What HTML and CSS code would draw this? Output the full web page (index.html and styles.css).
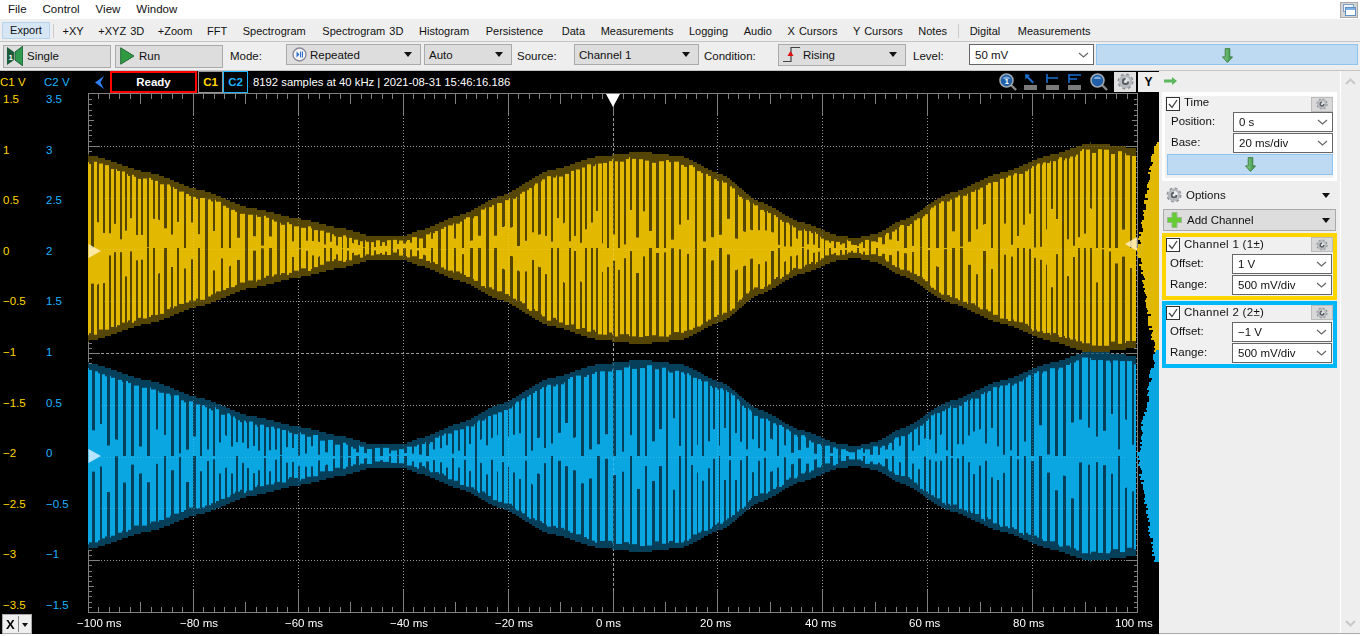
FILE: index.html
```html
<!DOCTYPE html>
<html lang="en">
<head>
<meta charset="utf-8">
<title>Scope</title>
<link rel="stylesheet" href="styles.css">
</head>
<body>
<svg class="defs" width="0" height="0" aria-hidden="true">
  <defs>
    <linearGradient id="gr" x1="0" x2="1" y1="0" y2="0"><stop offset="0" stop-color="#8fd08f"/><stop offset="1" stop-color="#2f8f3f"/></linearGradient>
    <symbol id="gear" viewBox="0 0 16 16">
      <circle cx="8" cy="8" r="6" fill="none" stroke="#8a8f96" stroke-width="3" stroke-dasharray="2.4 2.3"/>
      <circle cx="8" cy="8" r="5.2" fill="none" stroke="#b4b8bc" stroke-width="2.4"/>
      <path d="M8 4.500a3.500 3.500 0 1 0 3.500 3.500L8 8z" fill="#5a5f66"/>
      <circle cx="8" cy="8" r="1.500" fill="#e8e8e8"/>
    </symbol>
    <symbol id="down" viewBox="0 0 12 16">
      <path d="M3.500 .5h5v9h3L6 15.500 .5 9.500h3z" fill="url(#gr)" stroke="#3c7a3c"/>
    </symbol>
    <symbol id="chev" viewBox="0 0 11 6">
      <path d="M1 1l4.500 4L10 1" fill="none" stroke="#666" stroke-width="1.2"/>
    </symbol>
    <symbol id="check" viewBox="0 0 14 14">
      <rect x=".5" y=".5" width="13" height="13" fill="#fff" stroke="#333"/>
      <path d="M3 7l3 3.500L11 3" fill="none" stroke="#444" stroke-width="1.3"/>
    </symbol>
    <symbol id="mag" viewBox="0 0 18 18">
      <path d="M11 11l6 6" stroke="#8a8a8a" stroke-width="2.400"/>
      <circle cx="7.500" cy="7.500" r="6.500" fill="#1f5fa8" stroke="#a0a8b0" stroke-width="1.600"/>
      <path d="M3.500 6a4.500 4.500 0 0 1 8 0" fill="#7fa8d8"/>
    </symbol>
  </defs>
</svg>

<header class="menubar">
  <span>File</span><span>Control</span><span>View</span><span>Window</span>
  <svg class="restore" width="18" height="16" viewBox="0 0 18 16"><rect x=".5" y=".5" width="17" height="15" fill="#d4d4d4" stroke="#aaa"/><rect x="3.500" y="2.500" width="10" height="7" fill="#eef4fb" stroke="#7f9fc4"/><rect x="5.500" y="5.500" width="10" height="8" fill="#fff" stroke="#5f8fc4"/><rect x="6" y="6" width="9" height="2" fill="#7fb0e4"/></svg>
</header>

<nav class="tabs">
  <span class="tab-active">Export</span>
  <i class="tab-sep"></i>
  <span>+XY</span><span>+XYZ 3D</span><span>+Zoom</span><span>FFT</span><span>Spectrogram</span><span>Spectrogram 3D</span><span>Histogram</span><span>Persistence</span><span>Data</span><span>Measurements</span><span>Logging</span><span>Audio</span><span>X Cursors</span><span>Y Cursors</span><span>Notes</span>
  <i class="tab-sep"></i>
  <span>Digital</span><span>Measurements</span>
</nav>

<section class="controls">
  <div class="btn btn-single">
    <svg width="16" height="20" viewBox="0 0 16 20"><path d="M0 1l7 5v8l-7 5z" fill="#1d5a3a"/><path d="M16 0l-8 6v8l8 6z" fill="#2f9a4f" stroke="#1d5a3a"/><text x="1.500" y="14" class="icon-one">1</text></svg>
    <span>Single</span>
  </div>
  <div class="btn btn-run">
    <svg width="15" height="18" viewBox="0 0 15 18"><path d="M.7.8L14 9 .7 17.200z" fill="#2f9a3f" stroke="#256b3a"/></svg>
    <span>Run</span>
  </div>
  <span class="lbl lbl-mode">Mode:</span>
  <div class="sel sel-mode">
    <svg width="15" height="15" viewBox="0 0 15 15"><circle cx="7.500" cy="7.500" r="6.500" fill="#f4f4f4" stroke="#8a8a9a" stroke-width="1.400"/><path d="M4.500 4.500v6l3-3zM8 4.500h1.200v6H8zM10 4.500h1v6h-1z" fill="#2f6fd0"/></svg>
    <span>Repeated</span><i class="caret"></i>
  </div>
  <div class="sel sel-auto"><span>Auto</span><i class="caret"></i></div>
  <span class="lbl lbl-source">Source:</span>
  <div class="sel sel-source"><span>Channel 1</span><i class="caret"></i></div>
  <span class="lbl lbl-cond">Condition:</span>
  <div class="sel sel-rising">
    <svg width="17" height="17" viewBox="0 0 17 17"><path d="M0 15.500h8v-14h9" fill="none" stroke="#444" stroke-width="1.200"/><path d="M7.500 5l3 5h-6z" fill="#e01010"/></svg>
    <span>Rising</span><i class="caret"></i>
  </div>
  <span class="lbl lbl-level">Level:</span>
  <div class="combo combo-level"><span>50 mV</span><svg class="chev" width="11" height="6"><use href="#chev"/></svg></div>
  <div class="apply apply-top"><svg width="11" height="15"><use href="#down"/></svg></div>
</section>

<main class="main">
  <section class="scope">
    <div class="scope-head">
      <span class="unit unit-c1">C1 V</span>
      <span class="unit unit-c2">C2 V</span>
      <svg class="back" width="11" height="13" viewBox="0 0 11 13"><path d="M10 0L1 6.500l9 6.500-3.500-6.500z" fill="#2f7ff0"/></svg>
      <span class="ready">Ready</span>
      <span class="chbox chbox-1">C1</span>
      <span class="chbox chbox-2">C2</span>
      <span class="info">8192 samples at 40 kHz | 2021-08-31 15:46:16.186</span>
      <div class="tools">
        <svg class="t-zoom1" width="18" height="18" viewBox="0 0 18 18"><use href="#mag" width="18" height="18"/><text x="5.500" y="11" class="icon-one">1</text></svg>
        <svg class="t-cur" width="15" height="18" viewBox="0 0 15 18"><path d="M2 1l5 1-1.500 1.500L11 9l-1.500 1.500L4 5 2.500 6.500z" fill="#1d6fd0"/><rect x="1" y="12" width="13" height="5" fill="#7a7a7a"/></svg>
        <svg class="t-cur" width="15" height="18" viewBox="0 0 15 18"><path d="M2 1v9M2 5h11" stroke="#1d6fd0" stroke-width="1.600" fill="none"/><rect x="1" y="12" width="13" height="5" fill="#7a7a7a"/></svg>
        <svg class="t-cur" width="15" height="18" viewBox="0 0 15 18"><path d="M2 1v9M2 2h12M2 6h8" stroke="#1d6fd0" stroke-width="1.600" fill="none"/><rect x="1" y="12" width="13" height="5" fill="#7a7a7a"/></svg>
        <svg class="t-zoom2" width="18" height="18"><use href="#mag"/></svg>
        <span class="t-gear"><svg width="17" height="17"><use href="#gear"/></svg></span>
      </div>
      <span class="y-tab">Y</span>
    </div>
    <div class="scope-body">
      <div class="yaxis">
        <div class="yrow"><b>1.5</b><em>3.5</em></div>
        <div class="yrow"><b>1</b><em>3</em></div>
        <div class="yrow"><b>0.5</b><em>2.5</em></div>
        <div class="yrow"><b>0</b><em>2</em></div>
        <div class="yrow"><b>−0.5</b><em>1.5</em></div>
        <div class="yrow"><b>−1</b><em>1</em></div>
        <div class="yrow"><b>−1.5</b><em>0.5</em></div>
        <div class="yrow"><b>−2</b><em>0</em></div>
        <div class="yrow"><b>−2.5</b><em>−0.5</em></div>
        <div class="yrow"><b>−3</b><em>−1</em></div>
        <div class="yrow"><b>−3.5</b><em>−1.5</em></div>
      </div>
      <canvas id="plot" width="1071" height="520"></canvas>
    </div>
    <div class="scope-foot">
      <div class="x-btn"><span>X</span><i class="x-sep"></i><i class="caret"></i></div>
      <div class="xaxis">
        <span>−100 ms</span><span>−80 ms</span><span>−60 ms</span><span>−40 ms</span><span>−20 ms</span><span>0 ms</span><span>20 ms</span><span>40 ms</span><span>60 ms</span><span>80 ms</span><span>100 ms</span>
      </div>
    </div>
  </section>

  <aside class="side">
    <div class="panel">
      <div class="panel-top"><svg width="13" height="8" viewBox="0 0 13 8"><path d="M0 2.500h8V0l5 4-5 4V5.500H0z" fill="#5cb85c"/></svg></div>
      <div class="card card-time">
        <div class="card-head"><svg width="14" height="14"><use href="#check"/></svg><span class="head-title head-time">Time</span><span class="gearbtn"><svg width="12" height="12"><use href="#gear"/></svg></span></div>
        <div class="row"><span class="row-label">Position:</span><div class="combo combo-side"><span>0 s</span><svg class="chev" width="11" height="6"><use href="#chev"/></svg></div></div>
        <div class="row"><span class="row-label">Base:</span><div class="combo combo-side"><span>20 ms/div</span><svg class="chev" width="11" height="6"><use href="#chev"/></svg></div></div>
        <div class="apply apply-side"><svg width="11" height="15"><use href="#down"/></svg></div>
      </div>
      <div class="options"><svg width="16" height="16"><use href="#gear"/></svg><span>Options</span><i class="caret"></i></div>
      <div class="add"><svg width="15" height="16" viewBox="0 0 15 16"><path d="M5 .5h5v5h4.500v5H10v5H5v-5H.5v-5H5z" fill="#66cc33" stroke="#9ab890"/></svg><span>Add Channel</span><i class="caret"></i></div>
      <div class="card card-ch card-c1">
        <div class="card-head"><svg width="14" height="14"><use href="#check"/></svg><span class="head-title head-ch">Channel 1 (1±)</span><span class="gearbtn"><svg width="12" height="12"><use href="#gear"/></svg></span></div>
        <div class="row"><span class="row-label">Offset:</span><div class="combo combo-side"><span>1 V</span><svg class="chev" width="11" height="6"><use href="#chev"/></svg></div></div>
        <div class="row"><span class="row-label">Range:</span><div class="combo combo-side"><span>500 mV/div</span><svg class="chev" width="11" height="6"><use href="#chev"/></svg></div></div>
      </div>
      <div class="card card-ch card-c2">
        <div class="card-head"><svg width="14" height="14"><use href="#check"/></svg><span class="head-title head-ch">Channel 2 (2±)</span><span class="gearbtn"><svg width="12" height="12"><use href="#gear"/></svg></span></div>
        <div class="row"><span class="row-label">Offset:</span><div class="combo combo-side"><span>−1 V</span><svg class="chev" width="11" height="6"><use href="#chev"/></svg></div></div>
        <div class="row"><span class="row-label">Range:</span><div class="combo combo-side"><span>500 mV/div</span><svg class="chev" width="11" height="6"><use href="#chev"/></svg></div></div>
      </div>
    </div>
    <div class="vscroll">
      <svg width="11" height="7" viewBox="0 0 11 7"><path d="M1 6l4.500-4.500L10 6" fill="none" stroke="#c8c8c8" stroke-width="2"/></svg>
      <svg width="11" height="7" viewBox="0 0 11 7"><path d="M1 1l4.500 4.500L10 1" fill="none" stroke="#c8c8c8" stroke-width="2"/></svg>
    </div>
  </aside>
</main>
<script src="plot.js"></script>
</body>
</html>
```
FILE: styles.css
```css
* { box-sizing: border-box; }
html, body { margin: 0; height: 100%; }
body {
  width: 1360px; height: 636px; overflow: hidden; background: #fff;
  font: 11.5px "Liberation Sans", Arial, sans-serif; color: #111;
}
i, em, b { font-style: normal; font-weight: normal; }
svg { display: block; flex: none; }
.defs { position: absolute; }
.icon-one { font: bold 8px "Liberation Sans", sans-serif; fill: #fff; }

.menubar { height: 20px; display: flex; align-items: center; padding: 0 2px 2px 8px; gap: 16px; background: #fff; border-bottom: 1px solid #eee; }
.restore { margin-left: auto; margin-top: 2px; }

.tabs { height: 21px; background: #eee; display: flex; align-items: center; gap: 15.6px; padding-left: 2px; white-space: nowrap; font-size: 11px; word-spacing: 1px; }
.tab-active { width: 48px; height: 17px; margin-right: -13px; line-height: 15px; text-align: center; background: #d6e6f5; border: 1px solid #b8d4ec; }
.tab-sep { width: 1px; height: 14px; background: #ccc; margin-right: -5.6px; margin-left: -5px; }
.tab-active + .tab-sep { margin-left: 0; }
.tabs span:nth-child(3), .tabs span:nth-child(4), .tabs span:nth-child(6) { margin-left: -1px; }
.tabs span:nth-child(5) { margin-left: -2px; }
.tabs span:nth-child(8), .tabs span:nth-child(10), .tabs span:nth-child(19) { margin-left: 1px; }
.tabs span:nth-child(11) { margin-left: 3px; }
.tabs span:nth-child(20) { margin-left: 2px; }

.controls { height: 30px; background: #eee; border-top: 1px solid #c4c4c4; border-bottom: 1px solid #c4c4c4; display: flex; align-items: center; padding-left: 3px; font-size: 11.5px; white-space: nowrap; }
.btn { height: 23px; width: 108px; background: #ddd; border: 1px solid #aaa; display: flex; align-items: center; gap: 3px; padding-left: 3px; }
.btn-run { margin-left: 4px; gap: 4px; padding-left: 4px; }
.btn-single { gap: 4px; }
.lbl { display: block; }
.lbl-mode { width: 56px; margin-left: 7px; }
.lbl-source { width: 57px; margin-left: 5px; }
.lbl-cond { width: 74px; margin-left: 5px; }
.lbl-level { width: 56px; margin-left: 7px; }
.sel { height: 21px; background: #ddd; border: 1px solid #aaa; display: flex; align-items: center; gap: 3px; padding: 0 8px 0 4px; margin-bottom: 3px; }
.sel .caret { margin-left: auto; }
.sel-mode { width: 135px; padding-left: 5px; }
.sel-auto { width: 88px; margin-left: 3px; }
.sel-source { width: 125px; }
.sel-rising { width: 128px; height: 22px; }
.caret { width: 0; height: 0; border: 4px solid transparent; border-top: 5px solid #111; border-bottom: 0; flex: none; }
.combo { background: #fff; border: 1px solid #666; display: flex; align-items: center; justify-content: space-between; padding: 0 4px 0 5px; }
.combo-level { width: 125px; height: 21px; margin-bottom: 3px; }
.apply { background: #bddaf2; border: 1px solid #8ec5f0; display: flex; align-items: center; justify-content: center; }
.apply-top { width: 262px; height: 21px; margin-left: 2px; margin-bottom: 3px; padding-top: 2px; }

.main { display: flex; height: 563px; }
.scope { width: 1159px; background: #000; display: flex; flex-direction: column; color: #fff; }
.scope-head { height: 21px; margin-bottom: 1px; display: flex; align-items: center; white-space: nowrap; }
.unit { width: 44px; margin-top: 0; }
.unit-c1 { color: #ffd800; }
.unit-c2 { color: #1eb4ff; width: 50px; }
.back { margin-right: 5px; margin-top: 1px; }
.ready { width: 87px; height: 22px; border: 2px solid #f00; font-weight: bold; text-align: center; line-height: 18px; }
.chbox { width: 25px; height: 22px; font-weight: bold; text-align: center; line-height: 20px; border: 1px solid #999; }
.chbox-1 { color: #ffd800; margin-left: 1px; }
.chbox-2 { color: #1eb4ff; border-color: #1eb4ff; }
.info { margin-left: 5px; font-size: 11.3px; }
.tools { margin-left: auto; display: flex; align-items: center; }
.t-zoom1 { margin-right: 6px; }
.t-cur { margin-right: 7px; }
.t-zoom2 { margin-left: 1px; margin-right: 6px; }
.t-gear { width: 22px; height: 20px; background: #e0e0e0; display: flex; align-items: center; justify-content: center; }
.y-tab { width: 21px; height: 20px; margin-left: 2px; background: #eee; color: #000; font-weight: bold; font-size: 12px; text-align: center; line-height: 20px; }

.scope-body { display: flex; height: 520px; }
.yaxis { width: 88px; height: 520px; margin-top: -1px; display: flex; flex-direction: column; justify-content: space-between; }
.yrow { height: 14px; line-height: 14px; display: flex; }
.yrow b { width: 44px; padding-left: 3px; color: #ffd800; }
.yrow em { padding-left: 2px; color: #1eb4ff; }
#plot { display: block; width: 1071px; height: 520px; }

.scope-foot { flex: 1; display: flex; align-items: flex-start; }
.x-btn { width: 30px; height: 20px; margin: 1px 0 0 2px; background: #eee; border: 1px solid #aaa; color: #000; font-weight: bold; font-size: 13px; display: flex; align-items: center; padding-left: 3px; gap: 3px; }
.x-sep { width: 1px; height: 16px; background: #888; }
.x-btn .caret { border-width: 3.5px; border-top-width: 4px; border-bottom: 0; margin-top: 1px; }
.xaxis { margin: 4px 0 0 45px; display: grid; grid-template-columns: 103px 105px 105px 105px 101px 104px 105px 104px 104px 102px 35px; white-space: nowrap; }

.side { width: 201px; display: flex; background: #eee; border-bottom: 1px solid #aaa; }
.panel { width: 182px; padding: 0 3px; border-right: 1px solid #fff; font-size: 11.5px; }
.panel-top { height: 21px; padding: 6px 0 0 2px; }
.card { background: #f0f0f0; }
.card-time { height: 89px; border: 3px solid #fff; border-top-width: 4px; border-right-width: 4px; padding: 0 0 0 1px; }
.card-head { height: 16px; display: flex; align-items: center; }
.head-title { margin-left: 4px; padding-bottom: 1px; }
.head-time { padding-bottom: 4px; }
.head-ch { letter-spacing: .3px; }
.gearbtn { margin-left: auto; width: 22px; height: 15px; background: #d8d8d8; border: 1px solid #bbb; display: flex; align-items: center; justify-content: center; }
.row { display: flex; align-items: flex-start; height: 21px; padding-left: 5px; }
.row-label { width: 62px; line-height: 18px; }
.combo-side { width: 100px; height: 20px; padding-bottom: 1px; }
.apply-side { width: 166px; height: 21px; margin: 0 0 0 1px; }
.options { height: 28px; display: flex; align-items: center; padding: 0 7px 0 4px; gap: 4px; }
.options .caret, .add .caret { margin-left: auto; }
.add { height: 22px; margin: 0 1px 2px; background: #ddd; border: 1px solid #aaa; display: flex; align-items: center; padding: 0 5px 0 3px; gap: 5px; }
.card-ch { height: 67px; border: 4px solid; }
.card-c2 { margin-top: 1px; }
.card-c1 { border-color: #ffd500; }
.card-c2 { border-color: #00b8f8; }
.card-ch .card-head { height: 15px; margin-bottom: 2px; }
.card-ch .row { padding-left: 4px; }
.vscroll { flex: 1; display: flex; flex-direction: column; justify-content: space-between; align-items: center; padding: 7px 0 6px; }
```
FILE: plot.js
```js
(function () {
  var OX = 88, OY = 92;
  var canvas = document.getElementById('plot');
  var g = canvas.getContext('2d');
  var L = 0, R = 1049, T = 1, B = 519;
  var DX = (R - L) / 10, DY = (B - T) / 10;

  function rnd(n) {
    var s = Math.sin(n * 127.1 + 311.7) * 43758.5453;
    return s - Math.floor(s);
  }

  var KEYS = [[88,93],[150,75],[200,58],[250,40],[300,29],[340,20],[375,11],[400,11],[420,18],[460,33],
    [500,52],[550,78],[600,92],[640,96],[680,92],[720,74],[760,46],[800,26],[840,12],[855,10],[875,14],
    [900,27],[950,55],[1000,75],[1050,93],[1090,105],[1137,100]];

  function env(x) {
    for (var i = 1; i < KEYS.length; i++) {
      if (x <= KEYS[i][0]) {
        var a = KEYS[i - 1], b = KEYS[i];
        var t = (x - a[0]) / (b[0] - a[0]);
        t = t * t * (3 - 2 * t) * 0.5 + t * 0.5;
        return a[1] + (b[1] - a[1]) * t;
      }
    }
    return KEYS[KEYS.length - 1][1];
  }

  function grid() {
    g.fillStyle = '#808080';
    g.fillRect(L, T - 1, R - L + 1, 1);
    g.fillRect(L, B, R - L + 1, 1);
    g.fillRect(L, T - 1, 1, B - T + 2);
    g.fillRect(R, T - 1, 1, B - T + 2);
    var i, x, y, n;
    for (i = 1; i < 100; i++) {
      x = Math.round(L + i * DX / 10);
      n = i % 10 === 0 ? 22 : i % 5 === 0 ? 10 : 5;
      g.fillRect(x, T, 1, n);
      g.fillRect(x, B - n, 1, n);
    }
    for (i = 1; i < 100; i++) {
      y = Math.round(T + i * DY / 10);
      n = i % 10 === 0 ? 11 : i % 5 === 0 ? 5 : 3;
      g.fillRect(L + 1, y, n, 1);
      g.fillRect(R - n, y, n, 1);
    }
  }

  function dots(style) {
    g.fillStyle = style;
    var i, p;
    for (i = 1; i < 10; i++) {
      var mid = i === 5;
      var step = mid ? 5 : 3, len = mid ? 3 : 1;
      var x = Math.round(L + i * DX);
      for (p = T + 24; p < B - 22; p += step) g.fillRect(x, p, 1, len);
      var y = Math.round(T + i * DY);
      for (p = L + 13; p < R - 11; p += step) g.fillRect(p, y, len, 1);
    }
  }

  function trace(cy, bright, dim, seed) {
    var phase = 0, idx = 0, x;
    for (x = 88; x < 1136; x++) {
      var A = Math.round(env(x) / 2) * 2;
      var X = x - OX, cyL = cy - OY;
      g.fillStyle = dim;
      g.fillRect(X, cyL - A, 1, 2 * A);
      var P = 6.8 + 1.4 * Math.sin(x / 37 + seed);
      phase += 1 / P;
      idx = Math.floor(phase);
      var f = phase - idx;
      var band = Math.min(5, Math.max(2, A * 0.3));
      var topT = band + rnd(idx + seed) * 4;
      var botT = band + rnd(idx + seed + 50) * 4;
      g.fillStyle = bright;
      if (f < 0.66) {
        g.fillRect(X, cyL - A + topT, 1, 2 * A - topT - botT);
      } else {
        var up = A * Math.max(0, rnd(idx + seed + 100) * 0.55 - 0.12);
        var dn = A * Math.max(0, rnd(idx + seed + 200) * 0.55 - 0.12);
        g.fillRect(X, cyL - up, 1, up + dn);
      }
    }
  }

  function histogram(cy, color, seed) {
    g.fillStyle = color;
    for (var y = -106; y < 106; y += 2) {
      var w = 3 + 17 * (1 - Math.abs(y) / 106);
      w += (rnd(y + seed) - 0.5) * 4;
      w = Math.max(1, Math.round(w));
      g.fillRect(1071 - 1 - w, cy - OY + y, w + 1, 2);
    }
  }

  function tri(pts, fill) {
    g.fillStyle = fill;
    g.beginPath();
    g.moveTo(pts[0], pts[1]);
    g.lineTo(pts[2], pts[3]);
    g.lineTo(pts[4], pts[5]);
    g.closePath();
    g.fill();
  }

  g.fillStyle = '#000';
  g.fillRect(0, 0, 1071, 520);
  dots('#808080');
  grid();
  trace(247, '#e3b900', '#544505', 1.3);
  trace(455, '#0aa6e2', '#063f5a', 4.1);
  dots('rgba(255,255,255,0.2)');
  histogram(247, '#e0b800', 7);
  histogram(455, '#0aa6e2', 400);

  tri([0.5, 151, 13, 158, 0.5, 165], 'rgba(255,240,190,0.85)');
  tri([0.5, 356, 13, 363, 0.5, 370], 'rgba(200,235,255,0.9)');
  tri([1049, 144, 1037, 151, 1049, 158], 'rgba(255,240,190,0.85)');
  tri([518, 1, 532, 1, 525, 14], '#fff');
})();
```
